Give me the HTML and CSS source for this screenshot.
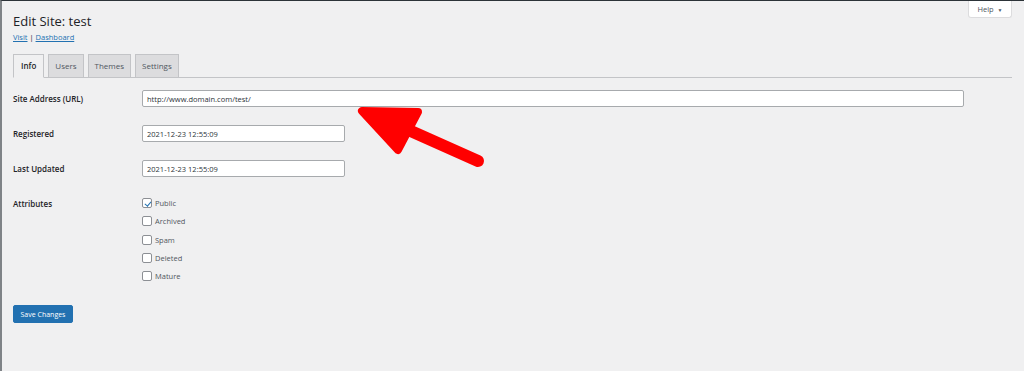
FILE: index.html
```html
<!DOCTYPE html>
<html lang="en">

<head>
    <meta charset="UTF-8">
    <meta name="viewport" content="width=device-width, initial-scale=1.0">
    <title>Edit Site: test</title>
    <link rel="stylesheet" href="styles.css">
</head>

<body>
    <div class="admin-edge"><span class="edge-mark"></span></div>
    <div class="wrap">
        <div class="page-header">
            <div>
                <h1>Edit Site: test</h1>
                <p class="edit-links"><a href="#">Visit</a> | <a href="#">Dashboard</a></p>
            </div>
            <button class="help-tab">Help <span class="caret">▼</span></button>
        </div>

        <nav class="nav-tabs">
            <a href="#" class="nav-tab active">Info</a>
            <a href="#" class="nav-tab">Users</a>
            <a href="#" class="nav-tab">Themes</a>
            <a href="#" class="nav-tab">Settings</a>
        </nav>

        <form class="site-form">
            <label class="field-label">Site Address (URL)</label>
            <input class="text-input wide" type="text" value="http://www.domain.com/test/">

            <label class="field-label">Registered</label>
            <input class="text-input" type="text" value="2021-12-23 12:55:09">

            <label class="field-label">Last Updated</label>
            <input class="text-input" type="text" value="2021-12-23 12:55:09">

            <span class="field-label attr-label">Attributes</span>
            <div class="attributes">
                <label class="check-row"><span class="check checked"></span>Public</label>
                <label class="check-row"><span class="check"></span>Archived</label>
                <label class="check-row"><span class="check"></span>Spam</label>
                <label class="check-row"><span class="check"></span>Deleted</label>
                <label class="check-row"><span class="check"></span>Mature</label>
            </div>
        </form>

        <button class="save-btn">Save Changes</button>

        <!-- annotation arrow -->
        <svg class="annotation" width="140" height="70" viewBox="0 0 140 70">
            <path d="M124 59 L50 26" stroke="#ff0000" stroke-width="12" stroke-linecap="round" fill="none"/>
            <path d="M8 9 L64 10 L44 48 Z" fill="#ff0000" stroke="#ff0000" stroke-width="8" stroke-linejoin="round"/>
        </svg>
    </div>
</body>

</html>
```

FILE: styles.css
```css
html,
body {
    margin: 0;
    height: 100%;
}

body {
    font-family: "Open Sans", "Noto Sans", Arial, sans-serif;
    font-size: 7.5px;
    color: #1d2327;
    background: #f0f0f1;
    border-top: 1px solid #2c3338;
    border-left: 2px solid #7f8387;
    box-sizing: border-box;
    display: flex;
}

.admin-edge {
    width: 0;
    position: relative;
}

.edge-mark {
    position: absolute;
    left: -2px;
    top: 33px;
    width: 2px;
    height: 18px;
    background: #72aee6;
}

.wrap {
    flex: 1;
    position: relative;
    padding: 0 12px 0 11px;
}

.page-header {
    display: flex;
    justify-content: space-between;
    align-items: flex-start;
}

h1 {
    font-size: 13px;
    font-weight: 400;
    margin: 10px 0 0;
    line-height: 20px;
}

.edit-links {
    margin: 1px 0 0;
    line-height: 11px;
}

.edit-links a {
    color: #2271b1;
}

.help-tab {
    font-family: inherit;
    font-size: 7.5px;
    color: #50575e;
    background: #fff;
    border: 1px solid #dcdcde;
    border-top: none;
    border-radius: 0 0 3px 3px;
    width: 44px;
    height: 18px;
    margin-top: -1px;
    margin-right: 0;
    padding: 0;
}

.help-tab .caret {
    font-size: 5px;
    margin-left: 2px;
}

.nav-tabs {
    display: flex;
    gap: 4px;
    margin-top: 11px;
    border-bottom: 1px solid #c3c4c7;
    padding-left: 0;
}

.nav-tab {
    display: block;
    padding: 0 6px;
    height: 22px;
    line-height: 22px;
    font-size: 8px;
    font-weight: 500;
    color: #50575e;
    text-decoration: none;
    background: #dcdcde;
    border: 1px solid #c3c4c7;
    margin-bottom: -1px;
}

.nav-tab:first-child {
    padding: 0 7px;
}

.nav-tab.active {
    background: #f0f0f1;
    color: #1d2327;
    font-weight: 600;
    border-bottom-color: #f0f0f1;
}

.site-form {
    display: grid;
    grid-template-columns: 129px 1fr;
    row-gap: 18px;
    padding-top: 12px;
    align-items: start;
}

.field-label {
    line-height: 17px;
    font-size: 8px;
    font-weight: 600;
}

.attr-label {
    line-height: 18px;
}

.attributes {
    display: flex;
    flex-direction: column;
    margin-top: -1px;
}

.text-input {
    box-sizing: border-box;
    width: 203px;
    height: 17px;
    font-family: inherit;
    font-size: 7.5px;
    color: #2c3338;
    border: 1px solid #a7aaad;
    border-radius: 2px;
    padding: 0 4px;
    background: #fff;
    margin: 0;
}

.text-input.wide {
    width: 822px;
}

.check-row {
    display: flex;
    align-items: center;
    gap: 3px;
    height: 18.3px;
    font-size: 7.5px;
    color: #50575e;
}

.check {
    box-sizing: border-box;
    width: 10px;
    height: 10px;
    border: 1px solid #8c8f94;
    border-radius: 2px;
    background: #fff;
    position: relative;
}

.check.checked::after {
    content: "";
    position: absolute;
    left: 2.5px;
    top: 0.5px;
    width: 2.5px;
    height: 5px;
    border: solid #2271b1;
    border-width: 0 1.5px 1.5px 0;
    transform: rotate(40deg);
}

.save-btn {
    display: block;
    margin-top: 20px;
    width: 60px;
    height: 18px;
    padding: 0;
    font-family: inherit;
    font-size: 7px;
    color: #fff;
    background: #2271b1;
    border: 1px solid #2271b1;
    border-radius: 2px;
}

.annotation {
    position: absolute;
    left: 352px;
    top: 101px;
    overflow: visible;
}
```
